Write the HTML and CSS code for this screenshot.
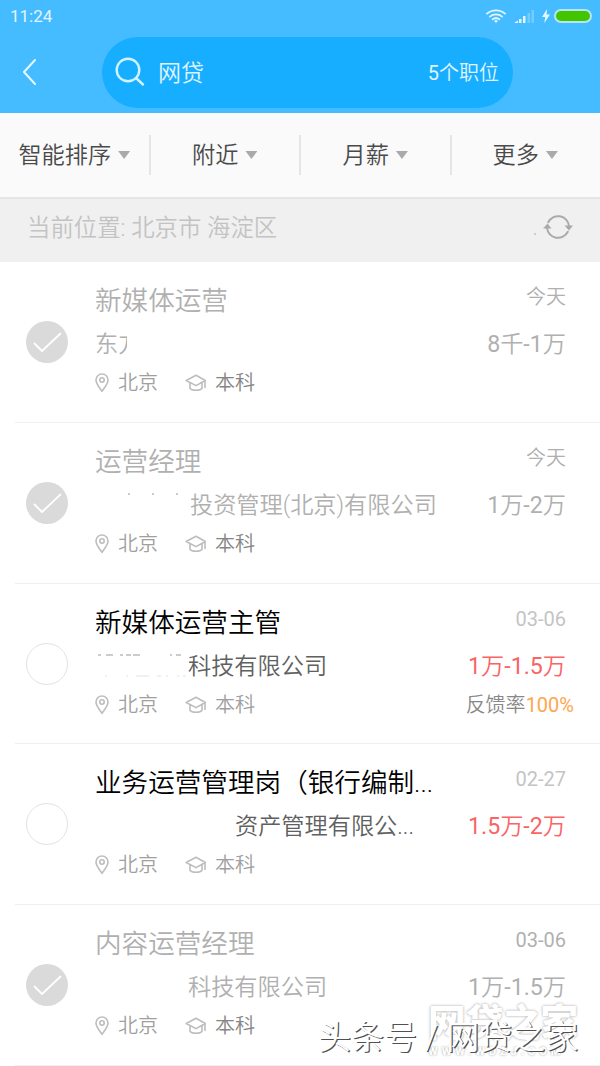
FILE: index.html
```html
<!DOCTYPE html>
<html lang="zh-CN">
<head>
<meta charset="utf-8">
<title>网贷 - 职位搜索</title>
<link rel="stylesheet" href="styles.css">
</head>
<body>
<svg width="0" height="0" class="defs">
  <symbol id="pin" viewBox="0 0 14 20"><path d="M7 1C3.600 1 1 3.600 1 7c0 3.700 3.300 7.500 6 11.300C9.700 14.500 13 10.700 13 7c0-3.400-2.600-6-6-6z"/><circle cx="7" cy="7" r="2.200"/></symbol>
  <symbol id="cap" viewBox="0 0 22 18"><path d="M1.200 6.500 11 1.300l9.300 5.200L11 11.600zM5 9v5.200c1.700 2.700 10.300 2.700 12 0V9M20 7v6.500"/></symbol>
  <symbol id="tick" viewBox="0 0 42 42"><path d="M8.500 22.500 16 30 34.500 12.500"/></symbol>
</svg>
<div class="screen">
  <header class="header">
    <div class="status">
      <span class="time">11:24</span>
      <svg class="wifi" width="20" height="14" viewBox="0 0 20 14"><path d="M1 4.700c5-4.500 13-4.500 18 0M3.900 7.600c3.600-3 8.600-3 12.200 0M6.700 10.300c2-1.600 4.600-1.600 6.600 0"/><circle cx="10" cy="12.200" r="1.400"/></svg>
      <svg class="signal" width="20" height="14" viewBox="0 0 20 14"><path d="M0 14l4-2.500V14zM5 10h2.500v4H5zM9 7h2.500v7H9z"/><path opacity=".3" d="M13.500 4H16v10h-2.500zM17.500 1H20v13h-2.500z"/></svg>
      <svg class="bolt" width="8" height="14" viewBox="0 0 8 14"><path d="M5 0 0 8h3.200L2.300 14 8 5.500H4.700z"/></svg>
      <span class="battery"></span>
    </div>
    <div class="searchbar">
      <svg class="back" width="14" height="26" viewBox="0 0 14 26"><path d="M13 1 2 13l11 12"/></svg>
      <div class="search">
        <svg class="lens" width="30" height="30" viewBox="0 0 30 30"><circle cx="13" cy="13" r="11.300"/><path d="M21 21l7 6.500"/></svg>
        <span class="query">网贷</span>
        <span class="count"><b>5</b>个职位</span>
      </div>
    </div>
  </header>
  <nav class="filters">
    <div class="filter"><span>智能排序</span><i class="caret"></i></div>
    <div class="filter"><span>附近</span><i class="caret"></i></div>
    <div class="filter"><span>月薪</span><i class="caret"></i></div>
    <div class="filter"><span>更多</span><i class="caret"></i></div>
  </nav>
  <div class="location">
    <span class="place">当前位置: 北京市 海淀区</span>
    <span class="dot"></span>
    <svg class="refresh" width="30" height="26" viewBox="0 0 30 26"><path class="arc" d="M5.200 8.300A11 11 0 0 1 26 12M24.800 17.700A11 11 0 0 1 4 14"/><path class="head" d="M0 14.500 4.500 9.500 8.500 14.500zM21.500 11.500h8.500L26 16.500z"/></svg>
  </div>
  <main class="jobs">
    <article class="job seen">
      <span class="mark"><svg><use href="#tick"/></svg></span>
      <div class="info">
        <h2>新媒体运营</h2>
        <p class="company"><span class="cut-right">东方</span></p>
        <p class="meta"><svg class="pin"><use href="#pin"/></svg><span>北京</span><svg class="cap"><use href="#cap"/></svg><span class="degree">本科</span></p>
      </div>
      <div class="side"><span class="date">今天</span><span class="salary"><b>8</b>千<b>-1</b>万</span></div>
    </article>
    <article class="job seen">
      <span class="mark"><svg><use href="#tick"/></svg></span>
      <div class="info">
        <h2>运营经理</h2>
        <p class="company"><svg class="traces" width="93" height="26" viewBox="0 0 93 26"><path d="M33 2h2M57 2h2M81 2h2"/></svg><span class="cut-left">投资管理(北京)有限公司</span></p>
        <p class="meta"><svg class="pin"><use href="#pin"/></svg><span>北京</span><svg class="cap"><use href="#cap"/></svg><span class="degree">本科</span></p>
      </div>
      <div class="side"><span class="date">今天</span><span class="salary"><b>1</b>万<b>-2</b>万</span></div>
    </article>
    <article class="job">
      <span class="mark"></span>
      <div class="info">
        <h2>新媒体运营主管</h2>
        <p class="company"><svg class="traces" width="93" height="26" viewBox="0 0 93 26"><path d="M3 2h3M11 2h7M25 2h3M31 2h5M38 2h7M75 2h2M81 2h5"/><path class="faint" d="M10 23h2M31 23h2M41 23h13M62 23h4M71 23h2M82 23h2M88 23h3"/></svg><span>科技有限公司</span></p>
        <p class="meta"><svg class="pin"><use href="#pin"/></svg><span>北京</span><svg class="cap"><use href="#cap"/></svg><span class="degree">本科</span></p>
      </div>
      <div class="side"><span class="date">03-06</span><span class="salary"><b>1</b>万<b>-1.5</b>万</span><span class="rate">反馈率<b>100%</b></span></div>
    </article>
    <article class="job">
      <span class="mark"></span>
      <div class="info">
        <h2>业务运营管理岗（银行编制...</h2>
        <p class="company"><span class="hidden-name long"></span><span>资产管理有限公...</span></p>
        <p class="meta"><svg class="pin"><use href="#pin"/></svg><span>北京</span><svg class="cap"><use href="#cap"/></svg><span class="degree">本科</span></p>
      </div>
      <div class="side"><span class="date">02-27</span><span class="salary"><b>1.5</b>万<b>-2</b>万</span></div>
    </article>
    <article class="job seen">
      <span class="mark"><svg><use href="#tick"/></svg></span>
      <div class="info">
        <h2>内容运营经理</h2>
        <p class="company"><span class="hidden-name"></span><span>科技有限公司</span></p>
        <p class="meta"><svg class="pin"><use href="#pin"/></svg><span>北京</span><svg class="cap"><use href="#cap"/></svg><span class="degree">本科</span></p>
      </div>
      <div class="side"><span class="date">03-06</span><span class="salary"><b>1</b>万<b>-1.5</b>万</span></div>
    </article>
  </main>
  <div class="logo-mark"><b>网贷之家</b><small>WWW.WDZJ.COM</small></div>
  <div class="author-mark">头条号 / 网贷之家</div>
</div>
</body>
</html>
```
FILE: styles.css
```css
* { box-sizing: border-box; }
body { margin: 0; background: #fff; font-family: Roboto, "Noto Sans CJK SC", sans-serif; font-weight: 350; }
.defs { position: absolute; }
h2, p { margin: 0; font-weight: inherit; }
svg { display: block; flex: none; fill: none; stroke-linecap: round; stroke-linejoin: round; }
.screen { position: relative; width: 600px; height: 1066px; overflow: hidden; }

.header { height: 113px; background: #45bcff; color: #e0f5ff; }
.status { display: flex; align-items: center; height: 31px; padding: 0 8px 0 10px; }
.time { flex: 1; font-size: 17px; font-weight: 400; }
.wifi { stroke: #e3f6ff; stroke-width: 1.8; margin-right: 8px; }
.wifi circle { fill: #e3f6ff; stroke: none; }
.signal { fill: #e3f6ff; margin-right: 8px; }
.bolt { fill: #e3f6ff; margin-right: 4px; }
.battery { width: 38px; height: 14px; border: 2px solid #b5e5ed; border-radius: 7px; background: #43c400; }
.searchbar { display: flex; align-items: center; height: 82px; padding-left: 22px; }
.back { stroke: #e6f7ff; stroke-width: 2; margin-right: 66px; }
.search { display: flex; align-items: center; width: 411px; height: 71px; padding: 0 14px 0 13px; border-radius: 36px; background: #18aeff; }
.lens { stroke: #d3f2ff; stroke-width: 2.4; }
.query { flex: 1; margin-left: 13px; padding-bottom: 2px; font-size: 23px; }
.count { padding-bottom: 2px; font-size: 20px; }
.count b, .salary b { font-weight: 400; }

.filters { display: grid; grid-template-columns: repeat(4, 150.5px); align-items: center; height: 84px; background: #fafafa; }
.filter { display: flex; align-items: center; justify-content: center; height: 40px; font-size: 23.2px; color: #4a4a4a; border-right: 2px solid #e5e5e5; }
.filter span { padding-bottom: 4px; }
.filter:last-child { border: 0; padding-right: 3px; }
.caret { width: 12px; height: 8px; margin-left: 7px; background: #aaa; clip-path: polygon(0 0, 100% 0, 50% 100%); }

.location { display: flex; align-items: center; height: 65px; padding: 0 27px 7px; border-top: 2px solid #e5e5e5; background: #f0f0f0; color: #c3c3c3; font-size: 23.4px; }
.place { padding-bottom: 3px; }
.dot { width: 2px; height: 2px; margin: 14px 7px 0 auto; background: #ccc; }
.refresh .arc { stroke: #aaa; stroke-width: 2; }
.refresh .head { fill: #aaa; }

.job { display: grid; grid-template-columns: 80px 1fr auto; height: 160.75px; margin-left: 15px; border-bottom: 1px solid #f0f0f0; }
.mark { width: 42px; height: 42px; margin: 59px 0 0 11px; border: 1.5px solid #e3e3e3; border-radius: 50%; }
.info { padding-top: 21px; white-space: nowrap; }
.info h2 { height: 36px; line-height: 36px; font-size: 26.6px; color: #000; }
.company { display: flex; height: 32px; margin-top: 9px; line-height: 32px; font-size: 23.2px; color: #606060; }
.cut-right { width: 32px; overflow: hidden; }
.cut-left { margin-left: 3px; text-indent: -1px; overflow: hidden; }
.hidden-name { width: 93px; }
.hidden-name.long { width: 140px; }
.traces { margin-top: 3px; stroke: #999; stroke-width: 1; stroke-linecap: butt; }
.traces .faint { stroke: #e3e3e3; }
.meta { display: flex; align-items: center; height: 32px; margin-top: 7px; font-size: 20px; line-height: 32px; color: #a0a0a0; }
.meta svg { stroke: #bdbdbd; stroke-width: 1.6; }
.pin { width: 14px; height: 20px; margin-right: 9px; }
.cap { width: 22px; height: 18px; margin: 0 8px 0 27px; }
.side { display: flex; flex-direction: column; align-items: flex-end; padding: 19px 34px 0 0; color: #c4c4c4; }
.date { height: 32px; line-height: 32px; font-size: 20px; }
.job:nth-child(n+3) .date { font-weight: 400; }
.salary { height: 32px; margin-top: 15px; line-height: 32px; font-size: 23.2px; color: #f96464; }
.rate { height: 32px; margin: 7px -8px 0 0; line-height: 32px; font-size: 20px; color: #888; }
.rate b { font-weight: 400; color: #ffa64d; }
.seen .mark { border: 0; background: #dadada; }
.seen .mark svg { width: 42px; height: 42px; stroke: #fff; stroke-width: 1.8; }
.seen h2, .seen .company, .seen .salary { color: #b0b0b0; }
.seen .date { color: #b0b0b0; }
.seen .degree { color: #858585; }

.logo-mark { position: absolute; left: 428px; top: 1000px; width: 152px; color: #fff; text-shadow: 0 0 3px #bbb, 0 0 2px #ccc; }
.logo-mark b { display: block; font-size: 37.5px; font-weight: 900; line-height: 46px; }
.logo-mark small { display: block; font-size: 11px; font-weight: 700; line-height: 12px; letter-spacing: 4px; white-space: nowrap; }
.author-mark { position: absolute; left: 318px; top: 1016px; font-size: 33px; line-height: 44px; color: #fff; white-space: nowrap; text-shadow: 1.2px 1.2px 0 #505050; }
```
